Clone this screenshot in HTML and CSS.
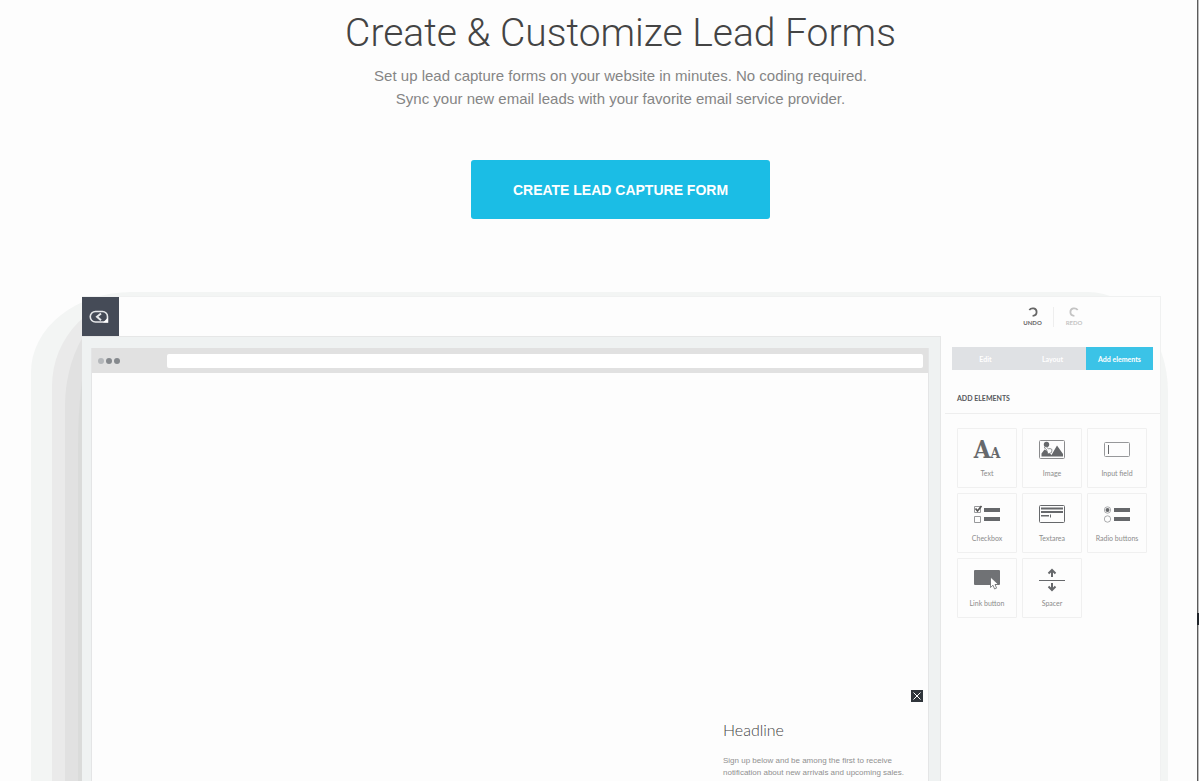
FILE: index.html
```html
<!DOCTYPE html>
<html lang="en">
<head>
    <meta charset="UTF-8">
    <meta name="viewport" content="width=device-width, initial-scale=1.0">
    <title>Create &amp; Customize Lead Forms</title>
    <link rel="stylesheet" href="styles.css">
</head>
<body>
    <main class="page">
        <section class="hero">
            <h1>Create &amp; Customize Lead Forms</h1>
            <p>Set up lead capture forms on your website in minutes. No coding required.<br>
            Sync your new email leads with your favorite email service provider.</p>
            <button class="btn-cta" type="button">CREATE LEAD CAPTURE FORM</button>
        </section>

        <!-- Layered shadow around the editor -->
        <div class="shade shade-outer">
            <div class="shade shade-mid">
                <div class="shade shade-inner">
                    <div class="shade shade-core">
                        <div class="editor">
                            <header class="topbar">
                                <a class="logo" href="#" aria-label="Home">
                                    <svg width="20" height="14" viewBox="0 0 20 14" fill="none" stroke="#e6e8ea" stroke-width="1.6">
                                        <path d="M6.500 1.500h7a5 5 0 0 1 5 5V12h-12a5.200 5.200 0 0 1 0-10.500z"/>
                                        <path d="M12 3.500 8 6.800 12 10.200" stroke-width="2"/>
                                        <path d="M14 12.500h5v-5z" fill="#fff" stroke="none"/>
                                    </svg>
                                </a>
                                <div class="history">
                                    <button class="btn-history" type="button">
                                        <svg width="10" height="10" viewBox="0 0 10 10" fill="none" stroke="currentColor" stroke-width="1.8">
                                            <path d="M1.300 3C3.500 .2 8.600 1 8.600 5c0 2.400-1.600 3.700-4 3.900"/>
                                        </svg>
                                        UNDO
                                    </button>
                                    <button class="btn-history disabled" type="button" disabled>
                                        <svg width="10" height="10" viewBox="0 0 10 10" fill="none" stroke="currentColor" stroke-width="1.8">
                                            <path d="M8.700 3C6.500 .2 1.400 1 1.400 5c0 2.400 1.600 3.700 4 3.900"/>
                                        </svg>
                                        REDO
                                    </button>
                                </div>
                            </header>

                            <div class="workspace">
                                <div class="stage">
                                    <div class="browser">
                                        <div class="browser-bar">
                                            <span class="dot light"></span>
                                            <span class="dot"></span>
                                            <span class="dot"></span>
                                            <input class="address" type="text" aria-label="Address">
                                        </div>
                                        <div class="canvas">
                                            <div class="popup">
                                                <button class="btn-close" type="button" aria-label="Close">
                                                    <svg width="12" height="12" viewBox="0 0 12 12" stroke="#fff" stroke-width="1">
                                                        <path d="M2.500 2.500l7 7M9.500 2.500l-7 7"/>
                                                    </svg>
                                                </button>
                                                <h2>Headline</h2>
                                                <p>Sign up below and be among the first to receive<br>notification about new arrivals and upcoming sales.</p>
                                            </div>
                                        </div>
                                    </div>
                                </div>

                                <aside class="panel">
                                    <div class="tabs">
                                        <button class="tab" type="button">Edit</button>
                                        <button class="tab" type="button">Layout</button>
                                        <button class="tab active" type="button">Add elements</button>
                                    </div>
                                    <h3>ADD ELEMENTS</h3>
                                    <div class="elements">
                                        <button class="element" type="button">
                                            <span class="glyph"><b>A</b><b class="small">A</b></span>
                                            Text
                                        </button>
                                        <button class="element" type="button">
                                            <svg width="26" height="24" viewBox="0 0 26 24">
                                                <rect x=".5" y="2.500" width="25" height="18" rx="1" fill="none" stroke="#8a8b8d"/>
                                                <path d="M2.500 18.500v-3l3-4 3.500 2 3.500 3.500 5.500-9.500 6 8.500v2.500z" fill="#66686b"/>
                                                <circle cx="7.500" cy="6.500" r="2.700" fill="#66686b"/>
                                                <path d="M5 9.500l2.500 2 1.500 4.500 3.500-1.500.5-3-2-1-1.500.5-2.500-2.500z" fill="#fff" stroke="#66686b" stroke-width=".7"/>
                                            </svg>
                                            Image
                                        </button>
                                        <button class="element" type="button">
                                            <svg width="26" height="24" viewBox="0 0 26 24" fill="none" stroke="#97989a">
                                                <rect x=".5" y="4.500" width="25" height="14" rx="1"/>
                                                <path d="M4.500 7v9" stroke="#66686b"/>
                                            </svg>
                                            Input field
                                        </button>
                                        <button class="element" type="button">
                                            <svg width="26" height="24" viewBox="0 0 26 24">
                                                <path d="M.5 3.500h6v6h-6zM.5 13.500h6v6h-6z" fill="none" stroke="#97989a"/>
                                                <path d="M1.500 5.500l2 2.500L7.500 3" fill="none" stroke="#555" stroke-width="1.700"/>
                                                <path d="M10 5h16v4H10zM10 14h16v4H10z" fill="#66686b"/>
                                            </svg>
                                            Checkbox
                                        </button>
                                        <button class="element" type="button">
                                            <svg width="26" height="24" viewBox="0 0 26 24">
                                                <rect x=".5" y="2.500" width="25" height="17" rx="1" fill="none" stroke="#66686b"/>
                                                <path d="M2 4.500h22v2H2zM2 8h22v2H2zM2 12h8v1.500H2zM11 11.500h1v3h-1z" fill="#66686b"/>
                                            </svg>
                                            Textarea
                                        </button>
                                        <button class="element" type="button">
                                            <svg width="26" height="24" viewBox="0 0 26 24">
                                                <circle cx="3.500" cy="7" r="3.200" fill="none" stroke="#97989a" stroke-width=".8"/>
                                                <circle cx="3.500" cy="7" r="2" fill="#66686b"/>
                                                <circle cx="3.500" cy="16" r="3.200" fill="none" stroke="#97989a" stroke-width=".8"/>
                                                <path d="M10 5h16v4H10zM10 14h16v4H10z" fill="#66686b"/>
                                            </svg>
                                            Radio buttons
                                        </button>
                                        <button class="element" type="button">
                                            <svg width="26" height="24" viewBox="0 0 26 24">
                                                <rect y="2" width="26" height="15" rx="1" fill="#707275"/>
                                                <path d="M16.500 9v10.500l2.500-2.300 1.600 3.800 2-.9-1.600-3.600h3.500z" fill="#fff" stroke="#66686b" stroke-width=".8"/>
                                            </svg>
                                            Link button
                                        </button>
                                        <button class="element" type="button">
                                            <svg width="26" height="24" viewBox="0 0 26 24" fill="none" stroke="#66686b" stroke-width="2">
                                                <path d="M13 9V2M9.500 5.500 13 2l3.500 3.500M13 15v7M9.500 18.500l3.500 3.500 3.500-3.500"/>
                                                <path d="M0 12.500h26" stroke-width="1"/>
                                            </svg>
                                            Spacer
                                        </button>
                                    </div>
                                </aside>
                            </div>
                        </div>
                    </div>
                </div>
            </div>
        </div>
    </main>
    <div class="edge">
        <span class="edge-mark"></span>
    </div>
</body>
</html>
```
FILE: styles.css
```css
* {
    margin: 0;
    padding: 0;
    box-sizing: border-box;
}

body {
    height: 100vh;
    display: flex;
    overflow: hidden;
    background-color: #fdfdfd;
    font-family: 'Liberation Sans', Arial, sans-serif;
    color: #444;
}

button {
    border: none;
    background: none;
    cursor: pointer;
    font-family: 'Lato', sans-serif;
}

svg {
    display: block;
}

.page {
    flex: 1;
    min-width: 0;
    display: flex;
    flex-direction: column;
}

.hero {
    padding: 9px 0 73px 44px;
    text-align: center;
}

.hero h1 {
    font-family: 'Roboto', sans-serif;
    font-size: 39px;
    font-weight: 300;
    line-height: 48px;
    color: #444;
}

.hero p {
    margin: 7px 0 50px;
    font-size: 15px;
    line-height: 23px;
    color: #858585;
}

.btn-cta {
    padding: 0 42px;
    height: 59px;
    border-radius: 3px;
    background-color: #1bbde5;
    color: white;
    font-family: 'Liberation Sans', Arial, sans-serif;
    font-size: 14px;
    font-weight: 700;
}

/* Shadow layers */
.shade {
    flex: 1;
    min-height: 0;
    display: flex;
    flex-direction: column;
}

.shade-outer {
    margin: 0 29px 0 31px;
    padding: 4px 7px 0 21px;
    border-radius: 100px 80px 0 0 / 80px 100px 0 0;
    background-color: #f3f5f4;
}

.shade-mid {
    padding-left: 13px;
    border-top-left-radius: 90px;
    background-color: #eaeaea;
}

.shade-inner {
    padding-left: 13px;
    border-top-left-radius: 80px 110px;
    background-color: #e1e1e1;
}

.shade-core {
    padding-left: 4px;
    border-top-left-radius: 40px 150px;
    background-color: #dadbda;
}

/* Editor */
.editor {
    flex: 1;
    min-height: 0;
    display: flex;
    flex-direction: column;
    border-top: 1px solid #f0f1f1;
    border-right: 1px solid #f0f1f1;
    background-color: #fdfdfd;
}

.topbar {
    display: flex;
    justify-content: space-between;
    height: 39px;
}

.logo {
    width: 37px;
    display: flex;
    align-items: center;
    padding-left: 7px;
    background-color: #454b57;
}

.history {
    display: flex;
    align-items: center;
    padding-right: 66px;
}

.btn-history {
    width: 41px;
    height: 20px;
    display: flex;
    flex-direction: column;
    align-items: center;
    gap: 2px;
    font-size: 6px;
    font-weight: 700;
    line-height: 7px;
    color: #666;
}

.btn-history.disabled {
    border-left: 1px solid #eee;
    color: #c4c4c4;
}

.workspace {
    flex: 1;
    min-height: 0;
    display: flex;
}

.stage {
    flex: 1;
    display: flex;
    padding: 11px 11px 0 9px;
    border-top: 1px solid #e6e7e7;
    border-right: 1px solid #e6e7e7;
    background-color: #eff2f2;
}

.browser {
    flex: 1;
    display: flex;
    flex-direction: column;
    border-left: 1px solid #e4e5e6;
    border-right: 1px solid #e4e5e6;
    background-color: #fdfdfd;
}

.browser-bar {
    height: 25px;
    display: flex;
    align-items: center;
    gap: 2px;
    padding: 0 5px 0 6px;
    background-color: #e1e1e1;
}

.dot {
    width: 6px;
    height: 6px;
    border-radius: 50%;
    background-color: #85898d;
}

.dot.light {
    background-color: #b4b7ba;
}

.address {
    flex: 1;
    height: 14px;
    margin-left: 45px;
    padding: 0 6px;
    border: none;
    border-radius: 2px;
    background-color: white;
    font-size: 8px;
}

.canvas {
    flex: 1;
    display: flex;
    align-items: flex-end;
    justify-content: flex-end;
}

.popup {
    width: 205px;
    padding-bottom: 2px;
}

.btn-close {
    display: block;
    margin: 0 5px 18px auto;
    background-color: #30353b;
}

.popup h2 {
    margin-bottom: 15px;
    font-family: 'Lato', sans-serif;
    font-size: 16px;
    font-weight: 300;
    line-height: 20px;
}

.popup p {
    font-size: 8px;
    line-height: 12px;
    color: #909090;
}

/* Side panel */
.panel {
    width: 219px;
    padding-top: 11px;
}

.tabs {
    display: flex;
    margin: 0 7px 0 11px;
}

.tab {
    flex: 1;
    height: 23px;
    background-color: #dfe1e4;
    color: white;
    font-size: 7px;
    font-weight: 700;
}

.tab.active {
    background-color: #3bc3e7;
}

.panel h3 {
    margin-left: 4px;
    padding: 22px 12px 9px;
    border-bottom: 1px solid #eee;
    font-family: 'Lato', sans-serif;
    font-size: 7px;
    font-weight: 700;
    line-height: 12px;
    color: #55585c;
}

.elements {
    display: grid;
    grid-template-columns: repeat(3, 60px);
    gap: 5px;
    padding: 14px 16px;
}

.element {
    height: 60px;
    display: flex;
    flex-direction: column;
    align-items: center;
    gap: 6px;
    padding-top: 9px;
    border: 1px solid #f0f0f0;
    border-radius: 1px;
    font-size: 7px;
    line-height: 10px;
    color: #8c8c8c;
}

.glyph {
    height: 24px;
    font-family: 'DejaVu Serif Condensed', 'DejaVu Serif', serif;
    font-size: 24px;
    line-height: 24px;
    color: #66686b;
}

.glyph .small {
    font-size: 14px;
}

/* Strip at the right side of the window */
.edge {
    position: relative;
    width: 2px;
    border-left: 1px solid #5c5c5c;
    background-color: #bcbcbc;
}

.edge-mark {
    position: absolute;
    top: 613px;
    left: -1px;
    width: 2px;
    height: 12px;
    background-color: #20242a;
}
```
